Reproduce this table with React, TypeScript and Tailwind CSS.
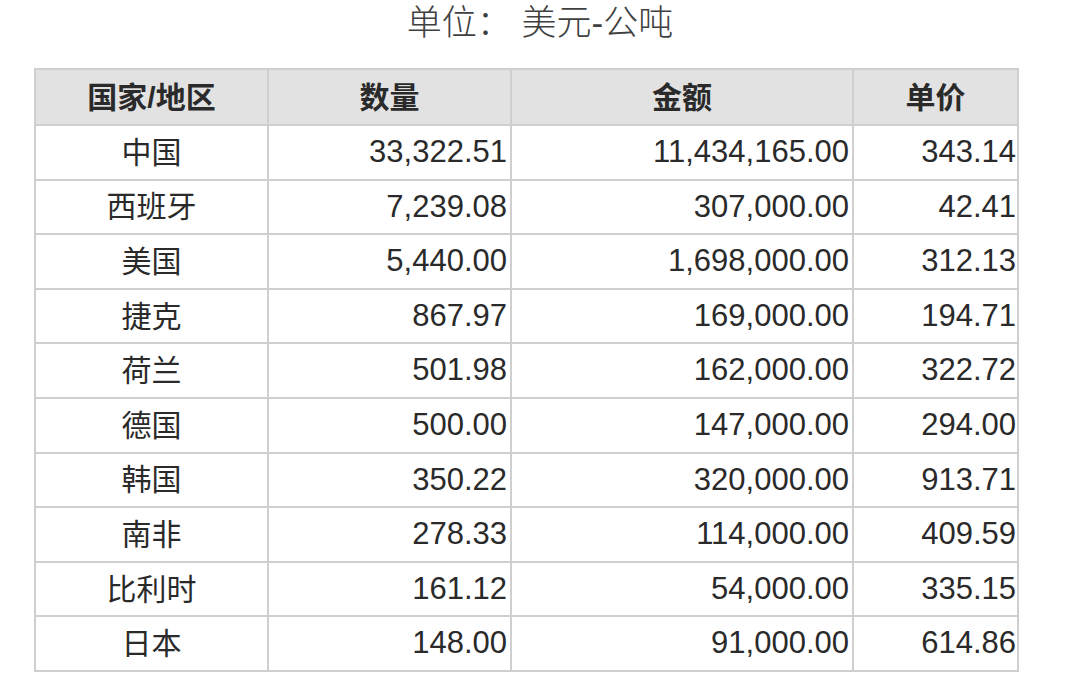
import React from "react";

const rows: [string, string, string, string][] = [
  ["中国", "33,322.51", "11,434,165.00", "343.14"],
  ["西班牙", "7,239.08", "307,000.00", "42.41"],
  ["美国", "5,440.00", "1,698,000.00", "312.13"],
  ["捷克", "867.97", "169,000.00", "194.71"],
  ["荷兰", "501.98", "162,000.00", "322.72"],
  ["德国", "500.00", "147,000.00", "294.00"],
  ["韩国", "350.22", "320,000.00", "913.71"],
  ["南非", "278.33", "114,000.00", "409.59"],
  ["比利时", "161.12", "54,000.00", "335.15"],
  ["日本", "148.00", "91,000.00", "614.86"],
];

const headers = ["国家/地区", "数量", "金额", "单价"];

export default function App() {
  return (
    <div
      className="w-[1080px] h-[693px] bg-white text-[#2a2a2a] overflow-hidden"
      style={{ fontFamily: '"Liberation Sans", "Noto Sans CJK SC", sans-serif' }}
    >
      <div className="h-[68px] flex justify-center pt-[1px]">
        <div className="text-[35px] leading-[44px] text-[#404040] font-light">
          单位：&nbsp;美元-公吨
        </div>
      </div>
      <div className="ml-[34px] w-[985px] p-[2px] bg-[#cfcfcf] grid grid-cols-[231px_241px_340px_163px] gap-[2px]">
        {headers.map((h) => (
          <div
            key={h}
            className="h-[54px] bg-[#e2e2e2] flex items-center justify-center text-[30px] font-bold text-[#2a2a2a]"
          >
            {h}
          </div>
        ))}
        {rows.map((r) => (
          <React.Fragment key={r[0]}>
            <div className="h-[52.6px] bg-white flex items-center justify-center text-[30px]">
              {r[0]}
            </div>
            <div className="h-[52.6px] bg-white flex items-center justify-end pr-[3px] text-[31px]">
              {r[1]}
            </div>
            <div className="h-[52.6px] bg-white flex items-center justify-end pr-[3px] text-[31px]">
              {r[2]}
            </div>
            <div className="h-[52.6px] bg-white flex items-center justify-end pr-[1px] text-[31px]">
              {r[3]}
            </div>
          </React.Fragment>
        ))}
      </div>
    </div>
  );
}
